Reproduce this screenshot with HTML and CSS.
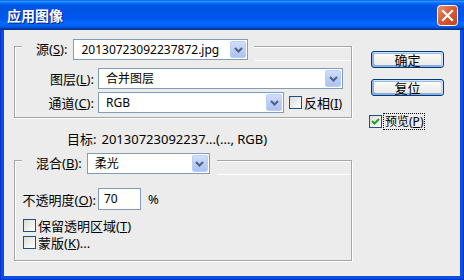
FILE: index.html
```html
<!DOCTYPE html>
<html lang="zh-CN">
<head>
<meta charset="utf-8">
<title>应用图像</title>
<link rel="stylesheet" href="styles.css">
</head>
<body>
<div class="window">
  <div class="titlebar">
    <span class="title">应用图像</span>
    <span class="close">
      <svg width="21" height="21" viewBox="0 0 21 21">
        <defs>
          <linearGradient id="cg" x1="0" y1="0" x2="1" y2="1">
            <stop offset="0" stop-color="#e99274"/>
            <stop offset="0.5" stop-color="#d9582f"/>
            <stop offset="1" stop-color="#c4401a"/>
          </linearGradient>
        </defs>
        <rect x="0.5" y="0.5" width="20" height="20" rx="3" fill="url(#cg)" stroke="#ffffff"/>
        <path d="M6 6 L15 15 M15 6 L6 15" stroke="#ffffff" stroke-width="2.2" stroke-linecap="square"/>
      </svg>
    </span>
  </div>
  <div class="client">
    <div class="main">
      <div class="group g1">
        <div class="group-head">
          <span class="stub"></span>
          <label class="head-label">源(<u>S</u>):</label>
          <div class="combo combo-src"><span class="val">20130723092237872.jpg</span><span class="drop"><svg width="9" height="6" viewBox="0 0 9 6"><path d="M1 1 L4.5 4.5 L8 1" fill="none" stroke="#4d6185" stroke-width="2"/></svg></span></div>
          <span class="fill fill-1"></span>
        </div>
        <div class="group-body body-1">
          <div class="row">
            <label class="lbl">图层(<u>L</u>):</label>
            <div class="combo combo-layer"><span class="val">合并图层</span><span class="drop"><svg width="9" height="6" viewBox="0 0 9 6"><path d="M1 1 L4.5 4.5 L8 1" fill="none" stroke="#4d6185" stroke-width="2"/></svg></span></div>
          </div>
          <div class="row">
            <label class="lbl">通道(<u>C</u>):</label>
            <div class="combo combo-chan"><span class="val">RGB</span><span class="drop"><svg width="9" height="6" viewBox="0 0 9 6"><path d="M1 1 L4.5 4.5 L8 1" fill="none" stroke="#4d6185" stroke-width="2"/></svg></span></div>
            <span class="check invert-check"></span>
            <label class="check-label">反相(<u>I</u>)</label>
          </div>
        </div>
      </div>

      <div class="target"><span class="target-key">目标:</span><span>20130723092237...(..., RGB)</span></div>

      <div class="group g2">
        <div class="group-head">
          <span class="stub"></span>
          <label class="head-label">混合(<u>B</u>):</label>
          <div class="combo combo-blend"><span class="val">柔光</span><span class="drop"><svg width="9" height="6" viewBox="0 0 9 6"><path d="M1 1 L4.5 4.5 L8 1" fill="none" stroke="#4d6185" stroke-width="2"/></svg></span></div>
          <span class="fill fill-2"></span>
        </div>
        <div class="group-body body-2">
          <div class="row">
            <label class="lbl lbl-wide">不透明度(<u>O</u>):</label>
            <div class="textbox">70</div>
            <span class="pct">%</span>
          </div>
          <div class="crow first">
            <span class="check"></span>
            <label class="check-label">保留透明区域(<u>T</u>)</label>
          </div>
          <div class="crow">
            <span class="check"></span>
            <label class="check-label">蒙版(<u>K</u>)...</label>
          </div>
        </div>
      </div>
    </div>

    <div class="side">
      <button class="btn">确定</button>
      <button class="btn second">复位</button>
      <div class="preview">
        <span class="check checked"><svg width="11" height="11" viewBox="0 0 11 11"><path d="M2 5 L4.5 7.5 L9 3" fill="none" stroke="#21a121" stroke-width="2"/></svg></span>
        <span class="focus">预览(<u>P</u>)</span>
      </div>
    </div>
  </div>
</div>
</body>
</html>
```

FILE: styles.css
```css
* { box-sizing: border-box; }

html, body {
  margin: 0;
  padding: 0;
  background: #ffffff;
}

body {
  width: 464px;
  height: 280px;
  overflow: hidden;
  font-family: "Noto Sans", "Noto Sans CJK SC", sans-serif;
  font-size: 13px;
  color: #000000;
}

.window {
  width: 464px;
  height: 280px;
  display: flex;
  flex-direction: column;
  background: #0a4fe0;
  border: 1px solid #0831d9;
  border-top: none;
}

.titlebar {
  height: 30px;
  flex: none;
  margin: 0 -1px;
  display: flex;
  align-items: center;
  justify-content: space-between;
  padding: 0 6px 0 7px;
  background: linear-gradient(180deg, #0058ee 0%, #3593ff 4%, #288eff 6%, #127dff 8%, #036ffc 10%, #0262ee 14%, #0057e5 20%, #0054e3 24%, #0055eb 56%, #005bf5 66%, #026afe 76%, #0062ef 86%, #0052d6 92%, #0040ab 94%, #003092 100%);
}

.title {
  font-family: "Noto Sans CJK SC", sans-serif;
  font-size: 14px;
  font-weight: bold;
  color: #ffffff;
  line-height: 16px;
  text-shadow: 1px 1px 0 #0a1883;
}

.close {
  display: flex;
  width: 21px;
  height: 21px;
  margin-top: 1px;
}

.client {
  flex: 1;
  margin: 0 3px 3px 3px;
  background: #ececec;
  display: flex;
  align-items: flex-start;
}

.main {
  width: 338px;
  margin-left: 10px;
  padding-top: 9px;
  display: flex;
  flex-direction: column;
}

/* group box */
.group { display: flex; flex-direction: column; }

.group-head {
  display: flex;
  align-items: flex-start;
  height: 21px;
}

.stub {
  width: 8px;
  align-self: stretch;
  margin-top: 7px;
  border-top: 1px solid #a7a6a1;
  border-left: 1px solid #a7a6a1;
  box-shadow: inset 1px 1px 0 #ffffff;
}

.fill {
  flex: 1;
  align-self: stretch;
  margin-top: 7px;
  border-top: 1px solid #a7a6a1;
  border-right: 1px solid #a7a6a1;
  box-shadow: inset 0 1px 0 #ffffff, 1px 1px 0 #ffffff;
}
.fill-1 { margin-left: 6px; }
.fill-2 { margin-left: 7px; }

.head-label {
  margin-left: 14px;
  line-height: 21px;
  white-space: nowrap;
}

.group-body {
  border-left: 1px solid #a7a6a1;
  border-right: 1px solid #a7a6a1;
  border-bottom: 1px solid #a7a6a1;
  box-shadow: inset 1px 0 0 #ffffff, 1px 1px 0 #ffffff;
  display: flex;
  flex-direction: column;
}

.body-1 { padding: 8px 0 4px 0; gap: 3px; }
.body-2 { padding: 14px 0 9px 0; }

.row {
  display: flex;
  align-items: center;
}

.lbl {
  width: 79px;
  text-align: right;
  white-space: nowrap;
  margin-right: 4px;
}
.lbl.lbl-wide {
  width: 81px;
  margin-right: 2px;
}

/* combo box */
.combo {
  height: 21px;
  border: 1px solid #7f9db9;
  background: #ffffff;
  display: flex;
  align-items: center;
  justify-content: space-between;
  padding: 1px;
  font-size: 12px;
}
.combo .val {
  padding-left: 6px;
  white-space: nowrap;
  line-height: 17px;
}
.drop {
  width: 16px;
  height: 17px;
  flex: none;
  display: flex;
  align-items: center;
  justify-content: center;
  border: 1px solid #bacff7;
  border-radius: 2px;
  background: linear-gradient(180deg, #d2defa 0%, #bccdf6 50%, #aec2f1 100%);
}

.combo-src { width: 175px; margin-left: 6px; }
.combo-layer { width: 245px; }
.combo-chan { width: 186px; }
.combo-blend { width: 123px; margin-left: 5px; }

.check {
  width: 13px;
  height: 13px;
  flex: none;
  border: 1px solid #1c5180;
  background: linear-gradient(135deg, #dcdcd7 0%, #ffffff 100%);
  display: flex;
  align-items: center;
  justify-content: center;
}

.invert-check { margin-left: 5px; }

.check-label {
  margin-left: 2px;
  white-space: nowrap;
}

.target {
  margin-top: 13px;
  height: 16px;
  line-height: 16px;
  padding-left: 53px;
  display: flex;
  white-space: nowrap;
}
.target-key { margin-right: 5px; }

.g2 { margin-top: 6px; }

.textbox {
  width: 43px;
  height: 22px;
  border: 1px solid #7f9db9;
  background: #ffffff;
  padding-left: 5px;
  line-height: 20px;
  font-size: 12px;
}
.pct { margin-left: 7px; }

.crow {
  display: flex;
  align-items: center;
  height: 17px;
  padding-left: 8px;
}
.crow.first { margin-top: 7px; }

/* right column */
.side {
  margin-left: 17px;
  padding-top: 21px;
  display: flex;
  flex-direction: column;
  align-items: flex-start;
}

.btn {
  margin-left: 2px;
  width: 73px;
  height: 17px;
  padding: 0;
  font-family: "Noto Sans", "Noto Sans CJK SC", sans-serif;
  font-size: 13px;
  line-height: 14px;
  color: #000000;
  border: 1px solid #003c74;
  border-radius: 3px;
  background: linear-gradient(180deg, #ffffff 0%, #f4f4f0 40%, #ecebe6 85%, #d6d0c5 100%);
  box-shadow: inset -1px 1px 0 #cee7ff, inset 1px 2px 0 #98b8ea, inset -2px 2px 0 #bcd4f6, inset 1px -1px 0 #89ade4, inset 2px -2px 0 #89ade4;
}
.btn.second { margin-top: 11px; }

.preview {
  margin-top: 17px;
  display: flex;
  align-items: center;
}

.focus {
  margin-left: 1px;
  border: 1px dotted #000000;
  padding: 0 1px;
  line-height: 15px;
  font-size: 12px;
  white-space: nowrap;
}
```
